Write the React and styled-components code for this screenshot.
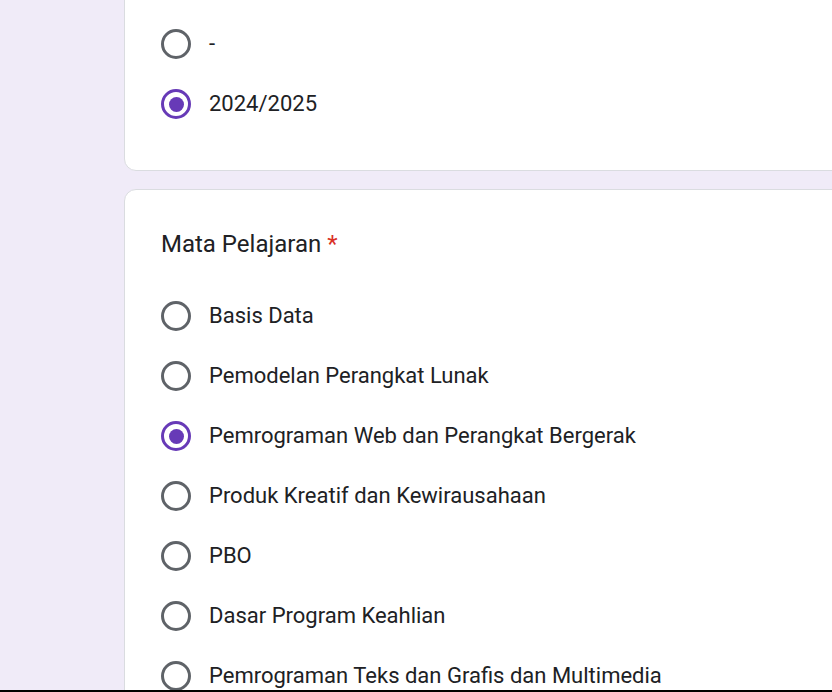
import React from "react";
import styled, { createGlobalStyle } from "styled-components";

const GlobalStyle = createGlobalStyle`
  html, body {
    margin: 0;
    padding: 0;
    background: #f0ebf8;
    font-family: Roboto, "Noto Sans", Arial, sans-serif;
    color: #202124;
  }
`;

const Screen = styled.div`
  width: 832px;
  height: 692px;
  display: flex;
  flex-direction: column;
  overflow: hidden;
  background: #f0ebf8;
`;

const Viewport = styled.div`
  flex: 1;
  overflow: hidden;
`;

const Column = styled.div`
  display: flex;
  flex-direction: column;
  gap: 18px;
  width: 960px;
  margin-left: 124px;
  margin-top: -17px;
`;

const Card = styled.section`
  background: #fff;
  border: 1px solid #dadce0;
  border-radius: 12px;
  padding: 36px 36px ${(p) => p.$bottom}px;
`;

const Title = styled.h2`
  margin: 0 0 30px;
  font-size: 24px;
  line-height: 36px;
  font-weight: 400;
  color: #202124;
  letter-spacing: 0;
`;

const Required = styled.span`
  color: #d93025;
  margin-left: 6px;
`;

const OptionList = styled.div`
  display: flex;
  flex-direction: column;
  gap: 12px;
`;

const Option = styled.label`
  display: flex;
  align-items: center;
  gap: 18px;
  height: 48px;
  cursor: pointer;
`;

const Radio = styled.span`
  box-sizing: border-box;
  width: 30px;
  height: 30px;
  flex: none;
  border-radius: 50%;
  border: 3px solid ${(p) => (p.$checked ? "#673ab7" : "#5f6368")};
  display: flex;
  align-items: center;
  justify-content: center;
  &::after {
    content: "";
    width: 15px;
    height: 15px;
    border-radius: 50%;
    background: #673ab7;
    display: ${(p) => (p.$checked ? "block" : "none")};
  }
`;

const OptionText = styled.span`
  font-size: 22px;
  line-height: 30px;
  color: #202124;
  white-space: nowrap;
`;

const BottomRule = styled.div`
  height: 2px;
  flex: none;
  background: #000;
`;

const yearOptions = [
  { label: "-", checked: false },
  { label: "2024/2025", checked: true },
];

const subjects = [
  { label: "Basis Data", checked: false },
  { label: "Pemodelan Perangkat Lunak", checked: false },
  { label: "Pemrograman Web dan Perangkat Bergerak", checked: true },
  { label: "Produk Kreatif dan Kewirausahaan", checked: false },
  { label: "PBO", checked: false },
  { label: "Dasar Program Keahlian", checked: false },
  { label: "Pemrograman Teks dan Grafis dan Multimedia", checked: false },
];

function Options({ items }) {
  return (
    <OptionList>
      {items.map((o) => (
        <Option key={o.label}>
          <Radio $checked={o.checked} />
          <OptionText>{o.label}</OptionText>
        </Option>
      ))}
    </OptionList>
  );
}

export default function App() {
  return (
    <>
      <GlobalStyle />
      <Screen>
        <Viewport>
          <Column>
            <Card $bottom={42}>
              <Options items={yearOptions} />
            </Card>
            <Card $bottom={42}>
              <Title>
                Mata Pelajaran<Required>*</Required>
              </Title>
              <Options items={subjects} />
            </Card>
          </Column>
        </Viewport>
        <BottomRule />
      </Screen>
    </>
  );
}
